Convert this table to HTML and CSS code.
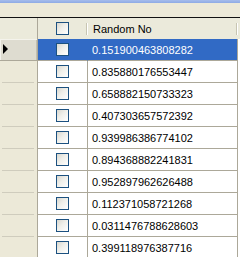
FILE: index.html
```html
<!DOCTYPE html>
<html>
<head>
<meta charset="utf-8">
<link rel="stylesheet" href="styles.css">
</head>
<body>
<div class="topband"></div>
<div class="toolbar"></div>
<div class="grid">
  <div class="hrow">
    <div class="rh hcorner"></div>
    <div class="hcell hcheck"><span class="cb"></span><span class="hsep"></span></div>
    <div class="hcell htext"><span class="htitle">Random No</span><span class="hsep"></span></div>
    <div class="tail"></div>
  </div>
  <div class="row sel">
    <div class="rh"><svg width="6" height="11" viewBox="0 0 6 11"><polygon points="0,0 5,5 0,10" fill="#000"/></svg></div>
    <div class="cell ccheck"><span class="cb"></span></div>
    <div class="cell ctext">0.151900463808282</div>
    <div class="tail"></div>
  </div>
  <div class="row">
    <div class="rh"></div>
    <div class="cell ccheck"><span class="cb"></span></div>
    <div class="cell ctext">0.835880176553447</div>
    <div class="tail"></div>
  </div>
  <div class="row">
    <div class="rh"></div>
    <div class="cell ccheck"><span class="cb"></span></div>
    <div class="cell ctext">0.658882150733323</div>
    <div class="tail"></div>
  </div>
  <div class="row">
    <div class="rh"></div>
    <div class="cell ccheck"><span class="cb"></span></div>
    <div class="cell ctext">0.407303657572392</div>
    <div class="tail"></div>
  </div>
  <div class="row">
    <div class="rh"></div>
    <div class="cell ccheck"><span class="cb"></span></div>
    <div class="cell ctext">0.939986386774102</div>
    <div class="tail"></div>
  </div>
  <div class="row">
    <div class="rh"></div>
    <div class="cell ccheck"><span class="cb"></span></div>
    <div class="cell ctext">0.894368882241831</div>
    <div class="tail"></div>
  </div>
  <div class="row">
    <div class="rh"></div>
    <div class="cell ccheck"><span class="cb"></span></div>
    <div class="cell ctext">0.952897962626488</div>
    <div class="tail"></div>
  </div>
  <div class="row">
    <div class="rh"></div>
    <div class="cell ccheck"><span class="cb"></span></div>
    <div class="cell ctext">0.112371058721268</div>
    <div class="tail"></div>
  </div>
  <div class="row">
    <div class="rh"></div>
    <div class="cell ccheck"><span class="cb"></span></div>
    <div class="cell ctext">0.0311476788628603</div>
    <div class="tail"></div>
  </div>
  <div class="row">
    <div class="rh"></div>
    <div class="cell ccheck"><span class="cb"></span></div>
    <div class="cell ctext">0.399118976387716</div>
    <div class="tail"></div>
  </div>
</div>
</body>
</html>
```
FILE: styles.css
```css
* { box-sizing: border-box; }
html, body {
  margin: 0;
  padding: 0;
  width: 240px;
  height: 257px;
  overflow: hidden;
  background: #ece9d8;
  font-family: "Liberation Sans", Arial, sans-serif;
  font-size: 11px;
}
.topband {
  height: 3px;
  background: linear-gradient(#a6bdec, #8eaae4);
}
.toolbar {
  height: 14px;
  background: #ece9d8;
  border-bottom: 1px solid #111;
  box-sizing: content-box;
}
.grid {
  display: flex;
  flex-direction: column;
}
.hrow {
  display: flex;
  height: 21px;
  background: #ebeadb;
}
.row {
  display: flex;
  height: 22px;
}
.rh {
  width: 38px;
  flex: none;
  border-right: 1px solid #aca899;
  background: #ece9d8;
  position: relative;
  display: flex;
  align-items: center;
  padding-left: 3px;
}
.row .rh::after {
  content: "";
  position: absolute;
  left: 2px;
  right: 3px;
  bottom: 0;
  height: 1px;
  background: #cfccbd;
}
.row.sel .rh {
  background: #dedcd0;
  border-bottom: 1px solid #aca899;
  box-shadow: inset 1px 1px 0 #f4f3ec, inset -1px 0 0 #c2bfb0;
}
.row.sel .rh::after { display: none; }
.hcorner { background: #ebeadb; }
.hcell {
  display: flex;
  align-items: center;
  height: 21px;
}
.hcheck {
  width: 50px;
  flex: none;
  padding-left: 18px;
}
.hcheck .cb { margin-right: auto; }
.htext {
  width: 150px;
  flex: none;
  padding-left: 5px;
  color: #000;
}
.htitle { margin-right: auto; }
.hsep {
  width: 2px;
  height: 12px;
  border-left: 1px solid #c7c5b2;
  border-right: 1px solid #fff;
}
.cell {
  height: 22px;
  background: #fff;
  border-right: 1px solid #aca899;
  border-bottom: 1px solid #aca899;
  display: flex;
  align-items: center;
}
.ccheck {
  width: 50px;
  flex: none;
  padding-left: 18px;
}
.ctext {
  width: 150px;
  flex: none;
  padding-left: 4px;
  padding-top: 1px;
  color: #000;
}
.row.sel .cell {
  background: #316ac5;
  color: #fff;
}
.row.sel .ccheck { border-right-color: #316ac5; }
.tail {
  flex: 1;
  background: #fff;
}
.hrow .tail { background: #ebeadb; }
.cb {
  display: block;
  width: 13px;
  height: 13px;
  border: 1px solid #1c5180;
  background: linear-gradient(135deg, #d8d7cf 0%, #efefea 45%, #ffffff 100%);
}
```
